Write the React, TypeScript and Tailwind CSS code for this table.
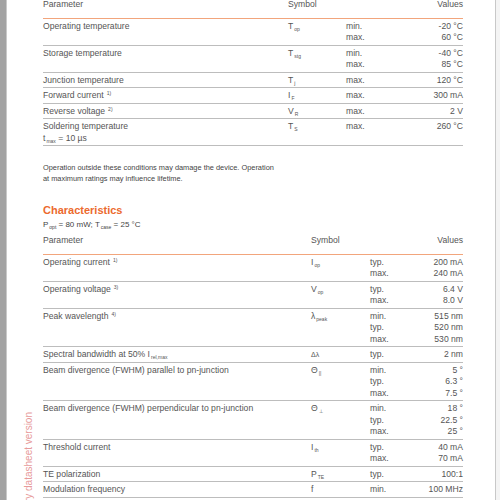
type Row = {
  param: React.ReactNode;
  param2?: React.ReactNode;
  sym: React.ReactNode;
  quals: string[];
  vals: string[];
};

const Sub = ({ children }: { children: React.ReactNode }) => (
  <span className="relative top-[2px] ml-[1px] text-[5px] leading-none">{children}</span>
);

const Sup = ({ children }: { children: React.ReactNode }) => (
  <span className="relative -top-[3px] ml-[3px] text-[5px] leading-none">{children}</span>
);

const ratings: Row[] = [
  { param: "Operating temperature", sym: <>T<Sub>op</Sub></>, quals: ["min.", "max."], vals: ["-20 °C", "60 °C"] },
  { param: "Storage temperature", sym: <>T<Sub>stg</Sub></>, quals: ["min.", "max."], vals: ["-40 °C", "85 °C"] },
  { param: "Junction temperature", sym: <>T<Sub>j</Sub></>, quals: ["max."], vals: ["120 °C"] },
  { param: <>Forward current<Sup>1)</Sup></>, sym: <>I<Sub>F</Sub></>, quals: ["max."], vals: ["300 mA"] },
  { param: <>Reverse voltage<Sup>2)</Sup></>, sym: <>V<Sub>R</Sub></>, quals: ["max."], vals: ["2 V"] },
  {
    param: "Soldering temperature",
    param2: <>t<Sub>max</Sub> = 10 µs</>,
    sym: <>T<Sub>S</Sub></>,
    quals: ["max."],
    vals: ["260 °C"],
  },
];

const characteristics: Row[] = [
  { param: <>Operating current<Sup>1)</Sup></>, sym: <>I<Sub>op</Sub></>, quals: ["typ.", "max."], vals: ["200 mA", "240 mA"] },
  { param: <>Operating voltage<Sup>3)</Sup></>, sym: <>V<Sub>op</Sub></>, quals: ["typ.", "max."], vals: ["6.4 V", "8.0 V"] },
  { param: <>Peak wavelength<Sup>4)</Sup></>, sym: <>λ<Sub>peak</Sub></>, quals: ["min.", "typ.", "max."], vals: ["515 nm", "520 nm", "530 nm"] },
  { param: <>Spectral bandwidth at 50% I<Sub>rel,max</Sub></>, sym: <span className="text-[7px]">Δλ</span>, quals: ["typ."], vals: ["2 nm"] },
  { param: "Beam divergence (FWHM) parallel to pn-junction", sym: <>Θ<Sub>||</Sub></>, quals: ["min.", "typ.", "max."], vals: ["5 °", "6.3 °", "7.5 °"] },
  { param: "Beam divergence (FWHM) perpendicular to pn-junction", sym: <>Θ<Sub>⊥</Sub></>, quals: ["min.", "typ.", "max."], vals: ["18 °", "22.5 °", "25 °"] },
  { param: "Threshold current", sym: <>I<Sub>th</Sub></>, quals: ["typ.", "max."], vals: ["40 mA", "70 mA"] },
  { param: "TE polarization", sym: <>P<Sub>TE</Sub></>, quals: ["typ."], vals: ["100:1"] },
  { param: "Modulation frequency", sym: "f", quals: ["min."], vals: ["100 MHz"] },
];

const Table = ({ rows, cols }: { rows: Row[]; cols: string }) => (
  <div className="w-[420px]">
    <div className={`grid ${cols} pb-[7px] border-b border-[#f2a57c]`}>
      <div>Parameter</div>
      <div>Symbol</div>
      <div />
      <div className="text-right">Values</div>
    </div>
    {rows.map((r, i) => (
      <div key={i} className={`grid ${cols} pt-[2px] pb-[1px] border-b border-[#bdbdbd]`}>
        <div>
          <div>{r.param}</div>
          {r.param2 && <div>{r.param2}</div>}
        </div>
        <div>{r.sym}</div>
        <div>
          {r.quals.map((q) => (
            <div key={q}>{q}</div>
          ))}
        </div>
        <div className="text-right">
          {r.vals.map((v) => (
            <div key={v}>{v}</div>
          ))}
        </div>
      </div>
    ))}
  </div>
);

export default function App() {
  return (
    <div className="relative flex h-[500px] w-[500px] overflow-hidden bg-white font-['Liberation_Sans',Arial,sans-serif] text-[8.6px] leading-[11.5px] text-[#555]">
      <div className="w-[7px] shrink-0 bg-[#a3a3a3] border-r border-[#c9c9c9]" />
      <div className="w-[488px] shrink-0 pl-[36px]">
        <div className="-mt-[1px]">
          <Table rows={ratings} cols="grid-cols-[245px_58px_1fr_auto]" />
        </div>
        <p className="mt-[16px] text-[7.4px] leading-[11px] text-[#444]">
          Operation outside these conditions may damage the device. Operation
          <br />
          at maximum ratings may influence lifetime.
        </p>
        <h2 className="mt-[19px] text-[11px] leading-[15px] font-bold text-[#ec6a2e]">Characteristics</h2>
        <div className="mt-[1px] text-[8px] leading-[12px] text-[#444]">
          P<Sub>opt</Sub> = 80 mW; T<Sub>case</Sub> = 25 °C
        </div>
        <div className="mt-[4px]">
          <Table rows={characteristics} cols="grid-cols-[268px_59px_1fr_auto]" />
        </div>
      </div>
      <div className="w-[5px] shrink-0 border-l border-[#c8c8c8] bg-[#f4f4f4]" />
      <div className="absolute left-[23px] top-[412px] rotate-180 [writing-mode:vertical-rl] whitespace-nowrap text-[10px] text-[#e79a9a]">
        Preliminary datasheet version
      </div>
    </div>
  );
}
